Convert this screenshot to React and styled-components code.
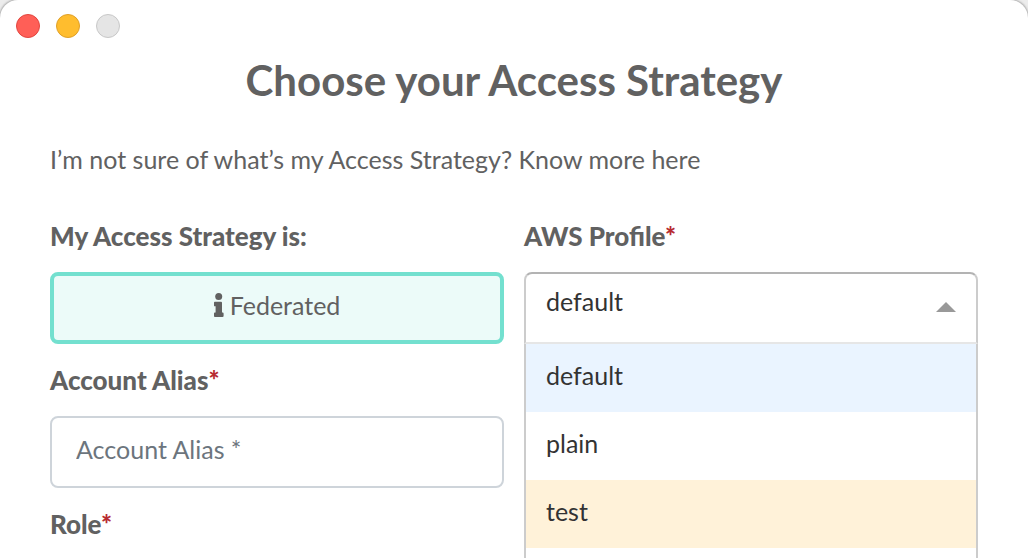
import React, { useState } from "react";
import styled, { createGlobalStyle } from "styled-components";

const GlobalStyle = createGlobalStyle`
  *, *::before, *::after { box-sizing: border-box; }
  html { height: 100%; overflow: hidden; background: #ececec; }
  body {
    height: 100%;
    margin: 0;
    color: #616161;
    font-family: Lato, "Open Sans", sans-serif;
    font-size: 25px;
    line-height: 32px;
  }
  #root { height: 100%; }
`;

const Window = styled.main`
  height: 100%;
  background: #fff;
  border-radius: 18px 18px 0 0;
  box-shadow: 0 0 2px 1px #aaa;
`;

const TitleBar = styled.header`
  display: flex;
  gap: 16px;
  padding: 14px 16px;
`;

const WindowButton = styled.button`
  width: 24px;
  height: 24px;
  padding: 0;
  border: 1px solid ${(p) => p.$edge};
  border-radius: 50%;
  background: ${(p) => p.$fill};
`;

const Content = styled.section`
  padding: 0 50px;
`;

const Title = styled.h1`
  margin: 0;
  color: #616161;
  font-size: 42px;
  font-weight: 700;
  line-height: 56px;
  text-align: center;
`;

const Help = styled.p`
  margin: 35px 0 25px;
`;

const HelpLink = styled.a`
  color: inherit;
  text-decoration: none;
`;

const Fields = styled.form`
  display: grid;
  grid-template-columns: 1fr 1fr;
  column-gap: 20px;
`;

const Field = styled.div`
  position: relative;
  min-width: 0;
`;

const Label = styled.label`
  display: block;
  padding: 16px 0;
  font-size: 26px;
  font-weight: 900;
  line-height: 40px;
`;

const Required = styled.span`
  color: #b72b31;
`;

const StrategyButton = styled.button`
  display: flex;
  align-items: center;
  justify-content: center;
  gap: 6px;
  width: 100%;
  height: 72px;
  padding: 0 0 6px;
  border: 4px solid #73e0cf;
  border-radius: 8px;
  background: #ecfbf9;
  color: #616161;
  font: inherit;
`;

const TextInput = styled.input`
  display: block;
  width: 100%;
  height: 72px;
  padding: 0 24px 6px;
  border: 2px solid #ced4da;
  border-radius: 8px;
  background: #fff;
  color: #333;
  font: inherit;
  &::placeholder { color: #6c757d; opacity: 1; }
`;

const SelectBox = styled.div`
  position: relative;
  z-index: 2;
`;

const Select = styled.select`
  appearance: none;
  display: block;
  width: 100%;
  height: 72px;
  padding: 0 56px 14px 20px;
  border: 2px solid #ccc;
  border-top-color: #b3b3b3;
  border-bottom-color: #e6e6e6;
  border-radius: 8px 8px 0 0;
  background: #fff;
  color: #333;
  font: inherit;
`;

const Arrow = styled.svg`
  position: absolute;
  top: 30px;
  right: 22px;
  pointer-events: none;
`;

const Menu = styled.ul`
  position: absolute;
  top: 100%;
  left: 0;
  right: 0;
  margin: 0;
  padding: 0;
  list-style: none;
  border: 2px solid #ccc;
  border-top: 0;
  background: #fff;
`;

const Option = styled.li`
  height: 68px;
  padding: 0 20px;
  background: ${(p) => p.$fill || "#fff"};
  color: #333;
  line-height: 62px;
`;

const InfoIcon = () => (
  <svg width="10" height="24" viewBox="0 0 10 24" fill="currentColor" aria-hidden="true">
    <circle cx="4.700" cy="3.500" r="3.500" />
    <path d="M.8 8.800h6.300c.5 0 .9.4.9.9v9.800h.7c.5 0 .9.400.9.9v2.700c0 .5-.4.9-.9.9H.8c-.5 0-.8-.4-.8-.9v-2.700c0-.5.3-.9.800-.9h.8v-6.200H.8c-.5 0-.8-.4-.8-.9V9.700c0-.5.3-.9.800-.9z" />
  </svg>
);

const profiles = [
  { name: "default", fill: "#eaf4ff" },
  { name: "plain" },
  { name: "test", fill: "#fff2d9" },
  { name: "" },
];

export default function App() {
  const [profile, setProfile] = useState("default");
  return (
    <>
      <GlobalStyle />
      <Window>
        <TitleBar>
          <WindowButton aria-label="Close" $fill="#ff5f57" $edge="#e2463f" />
          <WindowButton aria-label="Minimize" $fill="#ffbd2e" $edge="#e0a028" />
          <WindowButton aria-label="Zoom" disabled $fill="#e5e5e5" $edge="#c8c8c8" />
        </TitleBar>
        <Content>
          <Title>Choose your Access Strategy</Title>
          <Help>
            I’m not sure of what’s my Access Strategy? <HelpLink href="#help">Know more here</HelpLink>
          </Help>
          <Fields>
            <Field>
              <Label htmlFor="strategy">My Access Strategy is:</Label>
              <StrategyButton id="strategy" type="button">
                <InfoIcon />
                Federated
              </StrategyButton>
            </Field>
            <Field>
              <Label htmlFor="profile">AWS Profile<Required>*</Required></Label>
              <SelectBox>
                <Select id="profile" value={profile} onChange={(e) => setProfile(e.target.value)}>
                  {profiles.slice(0, 3).map((p) => (
                    <option key={p.name} value={p.name}>{p.name}</option>
                  ))}
                </Select>
                <Arrow width="20" height="10" viewBox="0 0 20 10" aria-hidden="true">
                  <path d="M10 0 20 10H0z" fill="#999" />
                </Arrow>
                <Menu role="listbox" aria-label="AWS Profile">
                  {profiles.map((p) => (
                    <Option key={p.name} role="option" aria-selected={p.name === profile} $fill={p.fill}>
                      {p.name}
                    </Option>
                  ))}
                </Menu>
              </SelectBox>
            </Field>
            <Field>
              <Label htmlFor="alias">Account Alias<Required>*</Required></Label>
              <TextInput id="alias" placeholder="Account Alias *" />
            </Field>
            <Field />
            <Field>
              <Label htmlFor="role">Role<Required>*</Required></Label>
              <TextInput id="role" />
            </Field>
          </Fields>
        </Content>
      </Window>
    </>
  );
}
